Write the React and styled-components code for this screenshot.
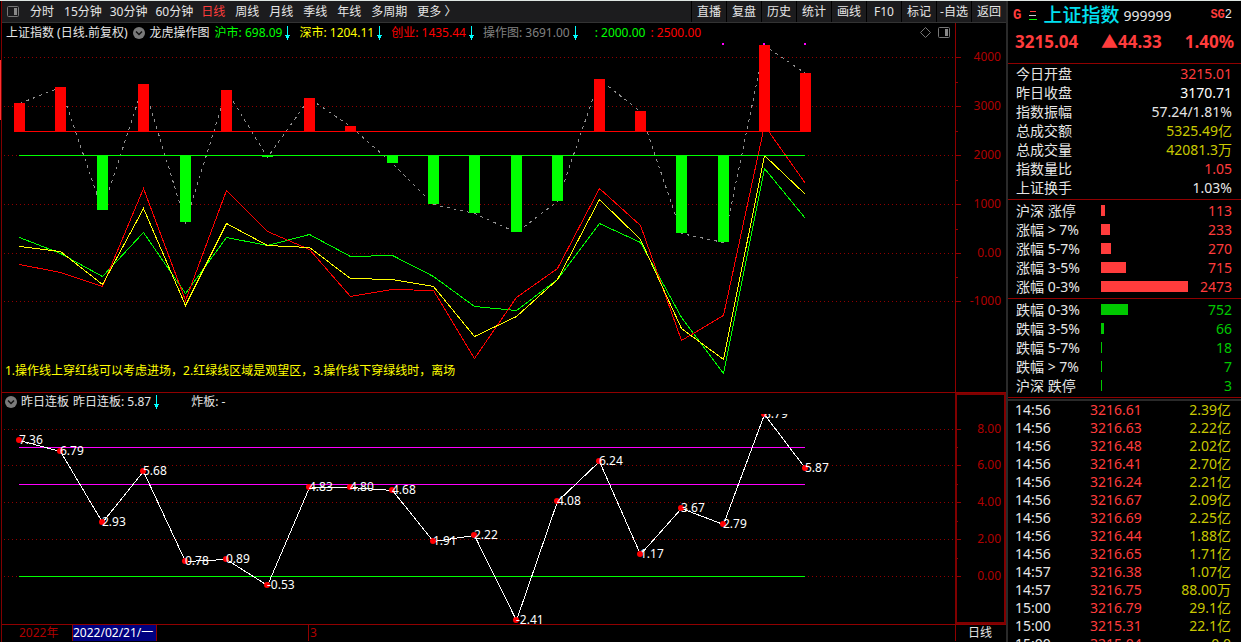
import React from 'react'
import styled, { createGlobalStyle } from 'styled-components'

const toolbarLeft = ['分时', '15分钟', '30分钟', '60分钟', '日线', '周线', '月线', '季线', '年线', '多周期', '更多 〉']
const toolbarRight = ['直播', '复盘', '历史', '统计', '画线', 'F10', '标记', '-自选', '返回']

// x of every trading day on the plot
const days = [17, 58, 100, 141, 183, 224, 265, 307, 348, 390, 431, 472, 514, 555, 597, 638, 679, 721, 762, 803]

const operate = [61, 45, 168, 42, 180, 48, 115, 56, 84, 121, 162, 171, 190, 159, 37, 69, 191, 200, 3, 31]
const shanghai = [195, 211, 234, 190, 251, 195, 203, 192, 214, 213, 234, 264, 268, 237, 181, 200, 275, 331, 126, 176]
const shenzhen = [204, 209, 242, 166, 263, 181, 203, 205, 236, 237, 244, 294, 274, 237, 157, 197, 286, 317, 113, 152]
const chinext = [222, 230, 244, 146, 258, 148, 189, 207, 254, 247, 248, 316, 255, 226, 146, 183, 298, 273, 83, 141]

const boards = [
  ['7.36', 26], ['6.79', 37], ['2.93', 108], ['5.68', 57], ['0.78', 147], ['0.89', 145], ['-0.53', 171],
  ['4.83', 73], ['4.80', 73], ['4.68', 76], ['1.91', 127], ['2.22', 121], ['-2.41', 206], ['4.08', 87],
  ['6.24', 47], ['1.17', 140], ['3.67', 94], ['2.79', 110], ['8.79', 0], ['5.87', 54],
]

const summary = [
  ['今日开盘', '3215.01', '#ff3c3c'],
  ['昨日收盘', '3170.71', '#fff'],
  ['指数振幅', '57.24/1.81%', '#e6e6e6'],
  ['总成交额', '5325.49亿', '#c8c800'],
  ['总成交量', '42081.3万', '#c8c800'],
  ['指数量比', '1.05', '#ff3c3c'],
  ['上证换手', '1.03%', '#e6e6e6'],
]

const rises = [['沪深 涨停', 113, 4], ['涨幅 > 7%', 233, 9], ['涨幅 5-7%', 270, 10], ['涨幅 3-5%', 715, 25], ['涨幅 0-3%', 2473, 87]]
const falls = [['跌幅 0-3%', 752, 27], ['跌幅 3-5%', 66, 3], ['跌幅 5-7%', 18, 1], ['跌幅 > 7%', 7, 1], ['沪深 跌停', 3, 1]]

const ticks = [
  ['14:56', '3216.61', '2.39亿'],
  ['14:56', '3216.63', '2.22亿'],
  ['14:56', '3216.48', '2.02亿'],
  ['14:56', '3216.41', '2.70亿'],
  ['14:56', '3216.24', '2.21亿'],
  ['14:56', '3216.67', '2.09亿'],
  ['14:56', '3216.69', '2.25亿'],
  ['14:56', '3216.44', '1.88亿'],
  ['14:56', '3216.65', '1.71亿'],
  ['14:57', '3216.38', '1.07亿'],
  ['14:57', '3216.75', '88.00万'],
  ['15:00', '3216.79', '29.1亿'],
  ['15:00', '3215.31', '22.1亿'],
  ['15:00', '3215.04', '0.0'],
]

const points = (values) => values.map((y, i) => `${days[i] + 0.5},${y + 0.5}`).join(' ')

const PanelIcon = () => (
  <svg width="12" height="11" viewBox="0 0 12 11" aria-hidden="true">
    <rect x="0.5" y="0.5" width="11" height="10" rx="1" fill="none" stroke="#777" />
    <rect x="7" y="2" width="3" height="7" fill="#888" />
  </svg>
)

const Chevron = () => (
  <svg width="12" height="12" viewBox="0 0 12 12" aria-hidden="true">
    <circle cx="6" cy="6" r="6" fill="#7a7a7a" />
    <path d="M3 4.5 L6 7.5 L9 4.5" fill="none" stroke="#111" strokeWidth="1.5" />
  </svg>
)

const Down = () => (
  <svg width="5" height="14" viewBox="0 0 5 14" aria-hidden="true">
    <path d="M2 0h1v9h2v1h-1v2h-1v2h-1v-2h-1v-2h-1v-1h2z" fill="#0ff" />
  </svg>
)

const Grid = ({ rows, minor, labels }) => (
  <g shapeRendering="crispEdges">
    {rows.map((y, i) => (
      <g key={y}>
        <line x1="2" x2="953" y1={y + 0.5} y2={y + 0.5} stroke="#900000" strokeDasharray="1 3" />
        <line x1="953" x2="959" y1={y + 0.5} y2={y + 0.5} stroke="#900000" />
        <AxisText x="999" y={y + 4}>{labels[i]}</AxisText>
      </g>
    ))}
    {minor.map((y) => <line key={y} x1="953" x2="956" y1={y + 0.5} y2={y + 0.5} stroke="#900000" />)}
  </g>
)

const OperateChart = () => (
  <Plot viewBox="0 0 1004 350" role="img" aria-label="龙虎操作图">
    <Grid rows={[15, 64, 113, 162, 211, 259]} minor={[40, 89, 138, 187, 235]} labels={['4000', '3000', '2000', '1000', '0.00', '-1000']} />
    <g fill="none" shapeRendering="crispEdges">
      <polyline points={points(operate)} stroke="#909090" strokeDasharray="3 4" />
      <polyline points={points(shanghai)} stroke="#0f0" />
      <polyline points={points(chinext)} stroke="#f00" />
      <polyline points={points(shenzhen)} stroke="#ff0" />
      <line x1="17" x2="803" y1="89.5" y2="89.5" stroke="#f00" />
      <line x1="17" x2="803" y1="113.5" y2="113.5" stroke="#0f0" />
    </g>
    {operate.map((y, i) => (y < 89
      ? <rect key={days[i]} x={days[i] - 5} y={y} width="11" height={90 - y} fill="#f00" />
      : <rect key={days[i]} x={days[i] - 5} y="113" width="11" height={y - 113} fill="#0f0" />
    ))}
    {days.slice(-3).map((x) => <rect key={x} x={x - 1} y="1" width="2" height="2" fill="#f0f" />)}
    <path d="M953.5 0V350" stroke="#900000" />
    <NoteText x="3" y="333">1.操作线上穿红线可以考虑进场，2.红绿线区域是观望区，3.操作线下穿绿线时，离场</NoteText>
  </Plot>
)

const BoardChart = () => (
  <Plot viewBox="0 0 1004 210" role="img" aria-label="昨日连板">
    <Grid rows={[15, 51, 88, 125, 162]} minor={[33, 70, 107, 144]} labels={['8.00', '6.00', '4.00', '2.00', '0.00']} />
    <g fill="none" shapeRendering="crispEdges">
      <line x1="17" x2="803" y1="33.5" y2="33.5" stroke="#f0f" />
      <line x1="17" x2="803" y1="70.5" y2="70.5" stroke="#f0f" />
      <line x1="17" x2="803" y1="162.5" y2="162.5" stroke="#0f0" />
      <polyline points={points(boards.map((b) => b[1]))} stroke="#fff" />
    </g>
    {boards.map(([label, y], i) => (
      <g key={days[i]}>
        <circle cx={days[i]} cy={y} r="3" fill="#f00" />
        <PointText x={days[i]} y={y + 4}>{label}</PointText>
      </g>
    ))}
  </Plot>
)

const Distribution = ({ rows, color }) => (
  <RangeBlock>
    {rows.map(([label, count, width]) => (
      <Row key={label}>
        <RangeName>{label}</RangeName>
        <Bar color={color} style={{ width }} />
        <Value color={color}>{count}</Value>
      </Row>
    ))}
  </RangeBlock>
)

const App = () => (
  <Page>
    <GlobalStyle />
    <Thumb />
    <Main>
      <Toolbar>
        <IconButton aria-label="面板"><PanelIcon /></IconButton>
        <Periods>
          {toolbarLeft.map((t) => (
            <Period key={t} $active={t === '日线'} $minutes={t.endsWith('分钟')}>{t}</Period>
          ))}
        </Periods>
        <Tools>
          {toolbarRight.map((t) => <Tool key={t}>{t}</Tool>)}
        </Tools>
      </Toolbar>
      <Legend>
        <Item>上证指数 (日线.前复权)</Item>
        <Chevron />
        <Item>龙虎操作图</Item>
        <Item color="#0f0">沪市: 698.09<Down /></Item>
        <Item color="#ff0" $gap={4}>深市: 1204.11<Down /></Item>
        <Item color="#f00" $gap={4}>创业: 1435.44<Down /></Item>
        <Item color="#808080" $gap={4}>操作图: 3691.00<Down /></Item>
        <Item color="#0f0" $gap={12}>: 2000.00</Item>
        <Item color="#f00">: 2500.00</Item>
        <Corner>
          <svg width="11" height="11" viewBox="0 0 11 11" aria-hidden="true">
            <path d="M5.5 0.5L10.5 5.5L5.5 10.5L0.5 5.5Z" fill="none" stroke="#777" />
          </svg>
          <PanelIcon />
        </Corner>
        <AxisHead />
      </Legend>
      <OperateChart />
      <Lower>
        <LowerLegend>
          <Chevron />
          <Item>昨日连板</Item>
          <Item>昨日连板: 5.87<Down /></Item>
          <Item $gap={28}>炸板: -</Item>
        </LowerLegend>
        <BoardChart />
        <AxisFrame />
      </Lower>
      <DateBar>
        <Year>2022年</Year>
        <Selected>2022/02/21/一</Selected>
        <Month>3</Month>
        <PeriodName>日线</PeriodName>
      </DateBar>
    </Main>
    <Side>
      <Title>
        <Tag>G</Tag>
        <svg width="8" height="11" viewBox="0 0 8 11" aria-hidden="true">
          <path d="M1 1.5H7" stroke="#ff3c3c" />
          <path d="M0 5.5H7" stroke="#ccc" />
          <path d="M0 9.5H8" stroke="#0f0" />
        </svg>
        <Name>上证指数</Name>
        <Code>999999</Code>
        <Group>SG<span>2</span></Group>
      </Title>
      <Price>
        <span>3215.04</span>
        <span>▲44.33</span>
        <span>1.40%</span>
      </Price>
      <Block>
        {summary.map(([label, value, color]) => (
          <Row key={label}>
            <span>{label}</span>
            <Value color={color}>{value}</Value>
          </Row>
        ))}
      </Block>
      <Distribution rows={rises} color="#ff3c3c" />
      <Distribution rows={falls} color="#00c800" />
      <Divider />
      <Trades>
        <tbody>
          {ticks.map(([time, price, amount], i) => (
            <tr key={i}>
              <td>{time}</td>
              <td>{price}</td>
              <td>{amount}</td>
            </tr>
          ))}
        </tbody>
      </Trades>
    </Side>
  </Page>
)

const GlobalStyle = createGlobalStyle`
  * {
    box-sizing: border-box;
  }
  body {
    margin: 0;
    background: #000;
    color: #e6e6e6;
    font: 12px/20px "Noto Sans", "Noto Sans CJK SC", sans-serif;
    overflow: hidden;
  }
  button {
    font: inherit;
    color: inherit;
    background: none;
    border: 0;
    padding: 0;
  }
`
const Page = styled.div`
  position: relative;
  display: grid;
  grid-template-columns: minmax(0, 1fr) 235px;
  height: 100vh;
  padding-left: 1px;
  border-top: 1px solid #dfe6e3;
  overflow: hidden;
`
// scroll thumb of the list that sits beyond the left edge
const Thumb = styled.div`
  position: absolute;
  left: 0;
  top: 59px;
  width: 1px;
  height: 60px;
  background: #ff3030;
`
const Main = styled.main`
  border-left: 1px solid #800000;
  min-width: 0;
`
const Toolbar = styled.nav`
  display: flex;
  align-items: center;
  height: 22px;
  background: #1c1c1e;
  border-bottom: 1px solid #333;
`
const IconButton = styled.button`
  display: flex;
  padding: 0 11px 0 5px;
`
const Periods = styled.div`
  display: flex;
  gap: 10px;
  white-space: nowrap;
`
const Period = styled.button`
  color: ${(p) => (p.$active ? '#ff3c3c' : '#e6e6e6')};
  margin-right: ${(p) => (p.$minutes ? -2 : 0)}px;
`
const Tools = styled.div`
  display: flex;
  margin-left: auto;
`
const Tool = styled.button`
  width: 35px;
  height: 21px;
  border-left: 1px solid #000;
  white-space: nowrap;
`
const Legend = styled.div`
  display: flex;
  align-items: center;
  gap: 5px;
  height: 19px;
  padding-left: 4px;
  white-space: nowrap;
`
const LowerLegend = styled(Legend)`
  gap: 4px;
  height: 17px;
  margin-bottom: 4px;
  padding-left: 3px;
`
const Item = styled.span`
  display: flex;
  align-items: center;
  gap: 3px;
  color: ${(p) => p.color || '#e6e6e6'};
  margin-left: ${(p) => p.$gap || 0}px;
`
const Corner = styled.div`
  display: flex;
  align-items: center;
  gap: 7px;
  margin-left: auto;
`
const AxisHead = styled.div`
  align-self: stretch;
  width: 51px;
  border-left: 1px solid #900000;
`
const Plot = styled.svg`
  display: block;
  width: 100%;
  font-size: 12px;
`
const AxisText = styled.text`
  fill: #b00000;
  text-anchor: end;
`
const NoteText = styled.text`
  fill: #ff0;
`
const PointText = styled.text`
  fill: #fff;
`
const Lower = styled.section`
  position: relative;
  border-top: 1px solid #900000;
  border-bottom: 1px solid #900000;
`
const AxisFrame = styled.div`
  position: absolute;
  inset: 0 0 0 auto;
  width: 51px;
  border: 2px solid #800000;
`
const DateBar = styled.footer`
  display: flex;
  height: 16px;
  line-height: 16px;
  color: #b00000;
`
const Year = styled.span`
  width: 70px;
  padding-left: 17px;
`
const Selected = styled.span`
  width: 85px;
  background: #000080;
  color: #fff;
  border: solid #900000;
  border-width: 0 1px;
  white-space: nowrap;
`
const Month = styled.span`
  margin-left: 151px;
  padding-left: 1px;
  border-left: 1px solid #900000;
`
const PeriodName = styled.span`
  width: 51px;
  margin-left: auto;
  padding-left: 12px;
  border-left: 1px solid #900000;
  color: #e6e6e6;
`
const Side = styled.aside`
  border-left: 2px solid #2a2a2a;
  font-size: 14px;
  line-height: 19px;
  overflow: hidden;
`
const Title = styled.header`
  display: flex;
  align-items: center;
  gap: 8px;
  height: 28px;
  padding: 0 9px 0 5px;
`
const Tag = styled.b`
  color: #ff3c3c;
  font: 700 14px "Liberation Mono", monospace;
`
const Name = styled.span`
  color: #00e0f0;
  font-size: 19px;
  font-weight: 500;
  margin-left: -2px;
`
const Code = styled.span`
  margin-left: -4px;
`
const Group = styled.b`
  margin-left: auto;
  color: #ff3c3c;
  font: 700 12px "Liberation Mono", monospace;
  span {
    color: #e6e6e6;
    font-weight: 400;
  }
`
const Price = styled.div`
  display: flex;
  justify-content: space-between;
  height: 34px;
  padding: 3px 7px 0 7px;
  color: #ff3c3c;
  font-size: 17px;
  font-weight: 700;
`
const Block = styled.section`
  border-top: 1px solid #900000;
  padding: 0 9px 2px 8px;
`
const RangeBlock = styled(Block)`
  padding-top: 1px;
`
const Row = styled.div`
  display: flex;
  align-items: center;
  height: 19px;
`
const RangeName = styled.span`
  width: 85px;
  white-space: nowrap;
`
const Bar = styled.span`
  height: 11px;
  background: ${(p) => p.color};
`
const Value = styled.span`
  margin-left: auto;
  color: ${(p) => p.color};
`
const Divider = styled.div`
  height: 4px;
  border-top: 1px solid #900000;
  border-bottom: 2px solid #2a2a2a;
`
const Trades = styled.table`
  width: 100%;
  border-collapse: collapse;
  line-height: 18px;
  td {
    height: 18px;
    padding: 0;
  }
  td:first-child {
    width: 82px;
    padding-left: 7px;
  }
  td:nth-child(2) {
    color: #ff3c3c;
  }
  td:last-child {
    color: #c8c800;
    text-align: right;
    padding-right: 10px;
  }
`
export default App
